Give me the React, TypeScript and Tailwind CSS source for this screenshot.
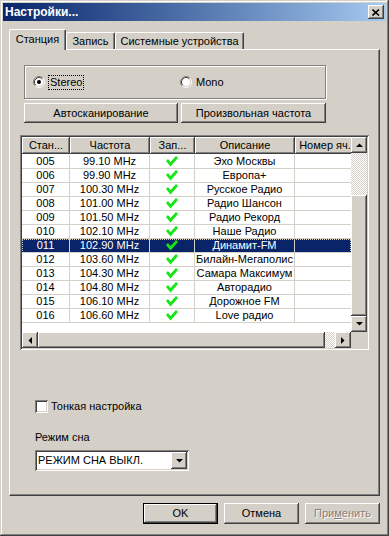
import React from "react";

const raised =
  "shadow-[inset_-1px_-1px_#404040,inset_1px_1px_#ffffff,inset_-2px_-2px_#808080,inset_2px_2px_#d4d0c8]";
const sunken =
  "shadow-[inset_1px_1px_#808080,inset_-1px_-1px_#ffffff,inset_2px_2px_#404040,inset_-2px_-2px_#d4d0c8]";
const checker =
  "bg-[repeating-conic-gradient(#ffffff_0_25%,#d4d0c8_0_50%)] bg-[length:2px_2px]";

const rows: [string, string, string][] = [
  ["005", "99.10 MHz", "Эхо Москвы"],
  ["006", "99.90 MHz", "Европа+"],
  ["007", "100.30 MHz", "Русское Радио"],
  ["008", "101.00 MHz", "Радио Шансон"],
  ["009", "101.50 MHz", "Радио Рекорд"],
  ["010", "102.10 MHz", "Наше Радио"],
  ["011", "102.90 MHz", "Динамит-FM"],
  ["012", "103.60 MHz", "Билайн-Мегаполис"],
  ["013", "104.30 MHz", "Самара Максимум"],
  ["014", "104.80 MHz", "Авторадио"],
  ["015", "106.10 MHz", "Дорожное FM"],
  ["016", "106.60 MHz", "Love радио"],
];

function Check() {
  return (
    <svg width="12" height="11" viewBox="0 0 12 11">
      <polygon points="0,5 2,3 4.5,6 10,0 12,2 4.5,10.5" fill="#14e614" />
    </svg>
  );
}

function Radio({ checked }: { checked: boolean }) {
  return (
    <svg width="12" height="12" viewBox="0 0 12 12">
      <circle cx="6" cy="6" r="4.5" fill="#ffffff" />
      <path d="M2.11 9.89 A5.5 5.5 0 0 1 9.89 2.11" stroke="#808080" fill="none" />
      <path d="M9.89 2.11 A5.5 5.5 0 0 1 2.11 9.89" stroke="#ffffff" fill="none" />
      <path d="M2.82 9.18 A4.5 4.5 0 0 1 9.18 2.82" stroke="#404040" fill="none" />
      <path d="M9.18 2.82 A4.5 4.5 0 0 1 2.82 9.18" stroke="#d4d0c8" fill="none" />
      {checked && <circle cx="6" cy="6" r="2" fill="#000000" />}
    </svg>
  );
}

function Tri({ dir }: { dir: "up" | "down" | "left" | "right" }) {
  const pts = {
    up: "0,4 7,4 3.5,0.5",
    down: "0,0 7,0 3.5,3.5",
    left: "4,0 4,7 0.5,3.5",
    right: "0,0 0,7 3.5,3.5",
  }[dir];
  const w = dir === "up" || dir === "down" ? 7 : 4;
  const h = dir === "up" || dir === "down" ? 4 : 7;
  return (
    <svg width={w} height={h} viewBox={`0 0 ${w} ${h}`}>
      <polygon points={pts} fill="#000000" />
    </svg>
  );
}

const widths = ["w-[48px]", "w-[80px]", "w-[45px]", "w-[100px]", "w-[60px]"];
const headers = ["Стан...", "Частота", "Зап...", "Описание", "Номер яч."];

export default function App() {
  return (
    <div
      className={`w-[389px] h-[536px] bg-[#d4d0c8] p-[3px] flex flex-col text-[11px] text-black font-['Liberation_Sans',Arial,sans-serif] shadow-[inset_-1px_-1px_#404040,inset_1px_1px_#d4d0c8,inset_-2px_-2px_#808080,inset_2px_2px_#ffffff] overflow-hidden`}
    >
      {/* Title bar */}
      <div className="h-[18px] shrink-0 bg-gradient-to-r from-[#0a246a] to-[#a6caf0] flex items-center justify-between pl-[2px] pr-[2px]">
        <span className="text-white font-bold text-[12px] leading-none">Настройки...</span>
        <div className={`w-[16px] h-[14px] bg-[#d4d0c8] ${raised} flex items-center justify-center`}>
          <svg width="8" height="7" viewBox="0 0 8 7">
            <path d="M0.5 0.5 L7 6.5 M7 0.5 L0.5 6.5" stroke="#000" strokeWidth="1.6" />
          </svg>
        </div>
      </div>

      {/* Content */}
      <div className="px-[6px] pt-[8px] flex flex-col">
        {/* Tabs */}
        <div className="h-[20px] flex items-end">
          <div className="relative z-10 w-[57px] h-[21px] mb-[-1px] bg-[#d4d0c8] border-l border-t border-white border-r border-r-[#404040] shadow-[inset_-1px_0_#808080] flex items-center justify-center pb-[2px] rounded-tl-[2px] rounded-tr-[2px]">
            Станция
          </div>
          <div className="w-[49px] h-[17px] bg-[#d4d0c8] border-l border-t border-white border-r border-r-[#404040] shadow-[inset_-1px_0_#808080] flex items-center justify-center rounded-tl-[2px] rounded-tr-[2px]">
            Запись
          </div>
          <div className="w-[129px] h-[17px] bg-[#d4d0c8] border-l border-t border-white border-r border-r-[#404040] shadow-[inset_-1px_0_#808080] flex items-center justify-center rounded-tl-[2px] rounded-tr-[2px]">
            Системные устройства
          </div>
        </div>

        {/* Panel */}
        <div className="h-[447px] border-l border-t border-white border-r border-b border-r-[#404040] border-b-[#404040] shadow-[inset_-1px_-1px_#808080] flex flex-col">
          {/* Group box */}
          <div className="ml-[14px] mt-[15px] w-[302px] h-[34px] border border-[#808080] shadow-[inset_1px_1px_#ffffff,1px_1px_#ffffff] flex items-center">
            <div className="ml-[8px] flex items-center gap-[3px] w-[147px]">
              <Radio checked={true} />
              <span className="border border-dotted border-black px-[1px] leading-[13px]">Stereo</span>
            </div>
            <div className="flex items-center gap-[4px]">
              <Radio checked={false} />
              <span className="leading-[13px]">Mono</span>
            </div>
          </div>

          {/* Buttons */}
          <div className="ml-[14px] mt-[4px] flex gap-[3px]">
            <div className={`w-[154px] h-[20px] ${raised} flex items-center justify-center`}>Автосканирование</div>
            <div className={`w-[145px] h-[20px] ${raised} flex items-center justify-center`}>Произвольная частота</div>
          </div>

          {/* List view */}
          <div className={`ml-[10px] mt-[12px] w-[349px] h-[215px] p-[2px] bg-white ${sunken} flex flex-col`}>
            <div className="h-[195px] flex">
              <div className="w-[329px] h-[195px] overflow-hidden flex flex-col">
                <div className="h-[17px] flex shrink-0">
                  {headers.map((h, i) => (
                    <div
                      key={h}
                      className={`${widths[i]} shrink-0 h-[17px] bg-[#d4d0c8] ${raised} flex items-center justify-center overflow-hidden whitespace-nowrap`}
                    >
                      {h}
                    </div>
                  ))}
                </div>
                <div className="h-[1px] shrink-0" />
                {rows.map((r) => {
                  const sel = r[0] === "011";
                  return (
                    <div
                      key={r[0]}
                      className={`h-[14px] shrink-0 flex ${sel ? "bg-[#0a246a] text-white outline outline-1 outline-dotted outline-[#d4d0c8] -outline-offset-1" : ""}`}
                    >
                      <div className={`${widths[0]} shrink-0 border-r border-b border-[#d4d0c8] flex items-center justify-center leading-none`}>{r[0]}</div>
                      <div className={`${widths[1]} shrink-0 border-r border-b border-[#d4d0c8] flex items-center justify-center leading-none`}>{r[1]}</div>
                      <div className={`${widths[2]} shrink-0 border-r border-b border-[#d4d0c8] flex items-center justify-center`}><Check /></div>
                      <div className={`${widths[3]} shrink-0 border-r border-b border-[#d4d0c8] flex items-center justify-center leading-none whitespace-nowrap`}>{r[2]}</div>
                      <div className={`${widths[4]} shrink-0 border-r border-b border-[#d4d0c8]`} />
                    </div>
                  );
                })}
              </div>
              {/* Vertical scrollbar */}
              <div className="w-[16px] h-[195px] flex flex-col">
                <div className={`h-[16px] bg-[#d4d0c8] ${raised} flex items-center justify-center`}><Tri dir="up" /></div>
                <div className={`h-[42px] ${checker}`} />
                <div className={`h-[121px] bg-[#d4d0c8] ${raised}`} />
                <div className={`h-[16px] bg-[#d4d0c8] ${raised} flex items-center justify-center`}><Tri dir="down" /></div>
              </div>
            </div>
            <div className="h-[16px] flex">
              <div className={`w-[16px] h-[16px] bg-[#d4d0c8] ${raised} flex items-center justify-center`}><Tri dir="left" /></div>
              <div className={`w-[287px] h-[16px] bg-[#d4d0c8] ${raised}`} />
              <div className={`w-[10px] h-[16px] ${checker}`} />
              <div className={`w-[16px] h-[16px] bg-[#d4d0c8] ${raised} flex items-center justify-center`}><Tri dir="right" /></div>
              <div className="w-[16px] h-[16px] bg-[#d4d0c8]" />
            </div>
          </div>

          {/* Checkbox */}
          <div className="ml-[25px] mt-[50px] flex items-center gap-[3px]">
            <div className={`w-[13px] h-[13px] bg-white ${sunken}`} />
            <span className="leading-[13px]">Тонкая настройка</span>
          </div>

          <div className="ml-[25px] mt-[18px] leading-[13px]">Режим сна</div>

          <div className={`ml-[25px] mt-[6px] w-[154px] h-[21px] bg-white p-[2px] ${sunken} flex items-center`}>
            <span className="flex-1 pl-[1px] leading-none">РЕЖИМ СНА ВЫКЛ.</span>
            <div className={`w-[16px] h-[17px] bg-[#d4d0c8] ${raised} flex items-center justify-center`}><Tri dir="down" /></div>
          </div>
        </div>

        {/* Dialog buttons */}
        <div className="mt-[7px] flex justify-end gap-[6px]">
          <div className="w-[75px] h-[21px] border border-black">
            <div className={`w-full h-full ${raised} flex items-center justify-center`}>OK</div>
          </div>
          <div className={`w-[75px] h-[21px] ${raised} flex items-center justify-center`}>Отмена</div>
          <div className={`w-[75px] h-[21px] ${raised} flex items-center justify-center text-[#808080] [text-shadow:1px_1px_0_#ffffff]`}>
            При<u>м</u>енить
          </div>
        </div>
      </div>
    </div>
  );
}
